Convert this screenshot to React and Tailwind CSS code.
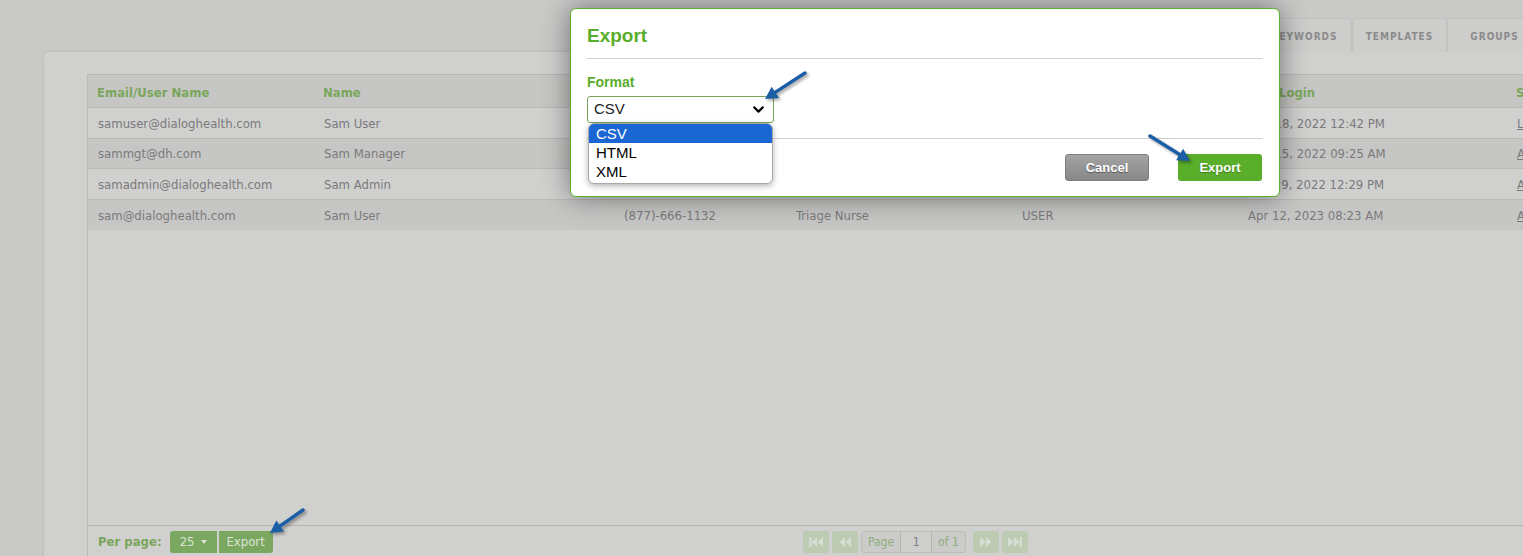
import { ChevronDown } from "lucide-react";

const users = [
  { email: "samuser@dialoghealth.com", name: "Sam User", phone: "(877)-666-1132", title: "Triage Nurse", role: "USER", login: "Nov 18, 2022 12:42 PM", status: "Locked" },
  { email: "sammgt@dh.com", name: "Sam Manager", phone: "(877)-666-1132", title: "Manager", role: "MANAGER", login: "Dec 15, 2022 09:25 AM", status: "Active" },
  { email: "samadmin@dialoghealth.com", name: "Sam Admin", phone: "(877)-666-1132", title: "Admin", role: "ADMIN", login: "Mar 29, 2022 12:29 PM", status: "Active" },
  { email: "sam@dialoghealth.com", name: "Sam User", phone: "(877)-666-1132", title: "Triage Nurse", role: "USER", login: "Apr 12, 2023 08:23 AM", status: "Active" },
];

const headers = ["Email/User Name", "Name", "Phone", "Title", "Role", "Last Login", "Status"];
const colWidths = ["w-[226px]", "w-[300px]", "w-[172px]", "w-[226px]", "w-[226px]", "w-[269px]", "w-[120px]"];

// blue annotation arrow, drawn pointing from tail to head
const Arrow = ({ className, x1, y1, x2, y2, w, h }) => {
  const ang = Math.atan2(y2 - y1, x2 - x1);
  const len = 14;
  const spread = 0.5;
  const p1 = [x2 - len * Math.cos(ang - spread), y2 - len * Math.sin(ang - spread)];
  const p2 = [x2 - len * Math.cos(ang + spread), y2 - len * Math.sin(ang + spread)];
  const bx = x2 - 9 * Math.cos(ang);
  const by = y2 - 9 * Math.sin(ang);
  return (
    <svg className={className} width={w} height={h} viewBox={`0 0 ${w} ${h}`}>
      <g style={{ filter: "drop-shadow(2px 2px 1.5px rgba(0,0,0,0.35))" }}>
        <line x1={x1} y1={y1} x2={bx} y2={by} stroke="#1c5ea5" strokeWidth="3.5" strokeLinecap="round" />
        <polygon points={`${x2},${y2} ${p1[0]},${p1[1]} ${p2[0]},${p2[1]}`} fill="#1c5ea5" />
      </g>
    </svg>
  );
};

const PageBtn = ({ children }) => (
  <div className="flex h-[22px] w-[26px] items-center justify-center rounded-[3px] bg-[#bccbb2] text-[#d8ddd4]">
    {children}
  </div>
);

const App = () => {
  return (
    <div className="relative h-[556px] w-[1523px] overflow-hidden bg-[#c9c9c8] font-['DejaVu_Sans_Condensed','DejaVu_Sans',sans-serif]">
      {/* tabs */}
      <div className="mt-[18px] flex h-[34px] justify-end">
        {["KEYWORDS", "TEMPLATES", "GROUPS"].map((t, i) => (
          <div
            key={t}
            className={`flex w-[95px] items-center justify-center rounded-t-[3px] border border-b-0 border-[#c2c2c1] bg-[#cdcdcc] pt-[2px] text-[10px] font-semibold tracking-[1px] text-[#8b8b8b] ${i === 2 ? "mr-[-19px]" : ""}`}
          >
            {t}
          </div>
        ))}
      </div>

      {/* panel */}
      <div className="ml-[44px] h-[504px] rounded-tl-[4px] bg-[#d0d0cf] pl-[43px] pt-[22px] shadow-[0_0_3px_rgba(0,0,0,0.12)]">
        <div className="flex h-[482px] w-[1500px] flex-col border-l border-t border-[#b9b9b8]">
          <div className="flex-1">
            <div className="flex h-[33px] items-center border-b border-[#b9b9b8] bg-[#c6c6c5] pt-[3px]">
              {headers.map((h, i) => (
                <div key={h} className={`${colWidths[i]} shrink-0 pl-[9px] text-[13px] font-bold text-[#7aa65b]`}>
                  {h}
                </div>
              ))}
            </div>
            {users.map((u, r) => (
              <div
                key={u.email}
                className={`flex h-[30.5px] items-center pt-[1px] text-[13px] text-[#7a7a7b] ${r % 2 ? "bg-[#c6c6c5]" : "bg-[#d0d0cf]"} ${r < 3 ? "border-b border-[#b9b9b8]" : ""}`}
              >
                {[u.email, u.name, u.phone, u.title, u.role, u.login].map((v, i) => (
                  <div key={i} className={`${colWidths[i]} shrink-0 pl-[10px]`}>
                    {v}
                  </div>
                ))}
                <div className={`${colWidths[6]} shrink-0 pl-[10px] underline`}>{u.status}</div>
              </div>
            ))}
          </div>

          {/* footer */}
          <div className="flex h-[31px] items-center border-t border-[#b3b3b2] pt-[1px]">
            <div className="flex w-[715px] shrink-0 items-center pl-[10px]">
              <span className="mr-[8px] text-[13px] font-bold text-[#7aa65b]">Per page:</span>
              <div className="flex h-[22px] w-[47px] items-center justify-center gap-[6px] rounded-l-[3px] bg-[#7aa860] text-[13px] text-[#dde3d8]">
                25
                <span className="h-0 w-0 border-x-[3.5px] border-t-[4px] border-x-transparent border-t-[#dde3d8]" />
              </div>
              <div className="ml-[2px] flex h-[22px] w-[54px] items-center justify-center rounded-r-[3px] bg-[#7aa860] text-[13px] text-[#dde3d8]">
                Export
              </div>
            </div>
            <div className="flex items-center gap-[3px]">
              <PageBtn>
                <svg width="16" height="12" viewBox="0 0 16 12" fill="currentColor"><rect x="1" y="1" width="2.5" height="10" /><polygon points="9,1 9,11 3.5,6" /><polygon points="15,1 15,11 9.5,6" /></svg>
              </PageBtn>
              <PageBtn>
                <svg width="14" height="12" viewBox="0 0 14 12" fill="currentColor"><polygon points="7,1 7,11 1.5,6" /><polygon points="13,1 13,11 7.5,6" /></svg>
              </PageBtn>
              <div className="flex h-[22px] items-center rounded-[3px] border border-[#bdbdbc] bg-[#cbcbca] text-[12px] text-[#8fae7b]">
                <span className="px-[6px]">Page</span>
                <div className="flex h-[20px] w-[32px] items-center justify-center border-x border-[#b5b5b4] bg-[#cfcfce] text-[#7d7d7d]">1</div>
                <span className="px-[6px]">of 1</span>
              </div>
              <div className="w-[1px]" />
              <PageBtn>
                <svg width="14" height="12" viewBox="0 0 14 12" fill="currentColor"><polygon points="1,1 1,11 6.5,6" /><polygon points="7,1 7,11 12.5,6" /></svg>
              </PageBtn>
              <PageBtn>
                <svg width="16" height="12" viewBox="0 0 16 12" fill="currentColor"><polygon points="1,1 1,11 6.5,6" /><polygon points="7,1 7,11 12.5,6" /><rect x="12.5" y="1" width="2.5" height="10" /></svg>
              </PageBtn>
            </div>
          </div>
        </div>
      </div>

      {/* modal */}
      <div className="absolute left-[570px] top-[8px] h-[189px] w-[710px] rounded-[6px] border border-[#5cae2e] bg-white px-[16px] font-['Liberation_Sans',Arial,sans-serif] shadow-[0_0_28px_rgba(0,0,0,0.45)]">
        <div className="flex h-[49px] items-end pb-[8px] text-[19px] font-bold text-[#5aad2b]">Export</div>
        <div className="border-t border-[#cfcfcf]" />
        <div className="mt-[15px] text-[14px] font-bold leading-[16px] text-[#5aad2b]">Format</div>
        <div className="relative mt-[6px] w-[187px]">
          <div className="flex h-[27px] items-center justify-between rounded-[3px] border border-[#77a45c] pl-[6px] pr-[6px] text-[15px] text-[#222]">
            CSV
            <ChevronDown size={17} strokeWidth={3} className="text-black" />
          </div>
          <div className="absolute left-[1px] top-[27px] z-10 w-[185px] overflow-hidden rounded-[6px] border border-[#a9a9a9] bg-white pb-[2px] text-[15px] leading-[19px] text-black shadow-[0_2px_6px_rgba(0,0,0,0.3)]">
            <div className="bg-[#1a66d2] pl-[7px] text-white">CSV</div>
            <div className="pl-[7px]">HTML</div>
            <div className="pl-[7px]">XML</div>
          </div>
        </div>
        <div className="mt-[15px] border-t border-[#cfcfcf]" />
        <div className="mt-[15px] flex justify-end gap-[29px] pr-[1px]">
          <button className="h-[27px] w-[84px] rounded-[3px] border border-[#7e7e7e] bg-[linear-gradient(#a3a3a3,#888888)] text-[13px] font-bold text-white [text-shadow:0_1px_1px_rgba(0,0,0,0.4)]">
            Cancel
          </button>
          <button className="h-[27px] w-[84px] rounded-[3px] bg-[#5aae2a] text-[13px] font-bold text-white [text-shadow:0_1px_1px_rgba(0,0,0,0.3)]">
            Export
          </button>
        </div>
      </div>

      {/* annotation arrows */}
      <Arrow className="absolute left-[755px] top-[66px]" w={60} h={42} x1={50} y1={7} x2={10} y2={33} />
      <Arrow className="absolute left-[1143px] top-[130px]" w={58} h={40} x1={7} y1={6} x2={47} y2={31} />
      <Arrow className="absolute left-[260px] top-[503px]" w={52} h={38} x1={43} y1={7} x2={10} y2={30} />
    </div>
  );
};

export default App;
